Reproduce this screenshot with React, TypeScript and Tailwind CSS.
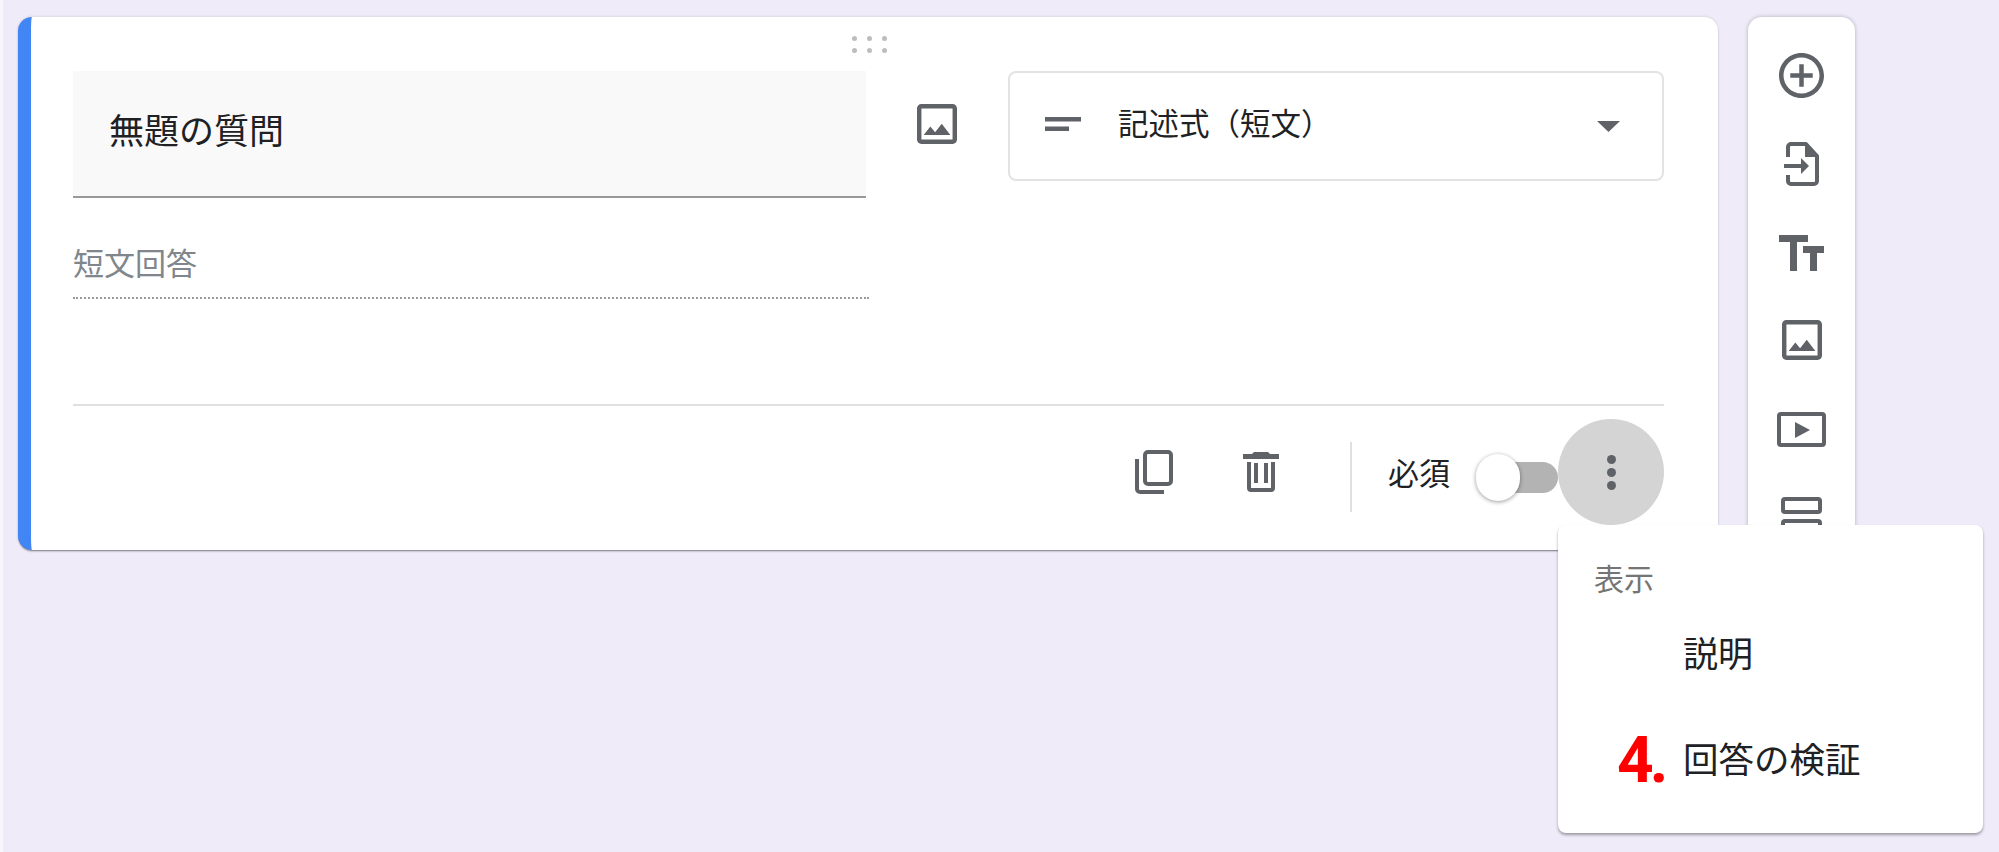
const IMAGE_PATH =
  'M19 5v14H5V5h14m0-2H5c-1.1 0-2 .9-2 2v14c0 1.1.9 2 2 2h14c1.1 0 2-.9 2-2V5c0-1.1-.9-2-2-2zm-4.86 8.86l-3 3.87L9 13.14 6 17h12l-3.86-5.14z';

function ImageIcon({ className }: { className?: string }) {
  return (
    <svg className={className} viewBox="3 3 18 18" fill="#5f6368">
      <path d={IMAGE_PATH} />
    </svg>
  );
}

function ImportIcon() {
  return (
    <svg className="h-[44px] w-[35px]" viewBox="0 0 35 44" fill="none" stroke="#5f6368" strokeWidth={4}>
      <path d="M4 15V5a3 3 0 0 1 3-3h15l11 12v25a3 3 0 0 1-3 3H7a3 3 0 0 1-3-3v-6" strokeLinejoin="round" />
      <path d="M21 1v14h14z" fill="#5f6368" stroke="none" />
      <path d="M0 24h18" />
      <path d="M17 16l8 8-8 8z" fill="#5f6368" stroke="none" />
    </svg>
  );
}

function TextIcon() {
  return (
    <svg className="h-[36px] w-[45px]" viewBox="0 0 45 36" fill="#5f6368">
      <path d="M0 0h29v7H18v29h-7V7H0z" />
      <path d="M24 11h21v7h-7v18h-7V18h-7z" />
    </svg>
  );
}

function VideoIcon() {
  return (
    <svg className="h-[35px] w-[49px]" viewBox="0 0 49 35" fill="none" stroke="#5f6368" strokeWidth={4}>
      <rect x="2" y="2" width="45" height="31" rx="2" />
      <path d="M18 10v16l15-8z" fill="#5f6368" stroke="none" />
    </svg>
  );
}

function SectionIcon() {
  return (
    <svg className="h-[40px] w-[41px]" viewBox="0 0 41 40" fill="none" stroke="#5f6368" strokeWidth={4}>
      <rect x="2" y="2" width="37" height="13" rx="2" />
      <rect x="2" y="24" width="37" height="13" rx="2" />
    </svg>
  );
}

function CopyIcon() {
  return (
    <svg className="h-[44px] w-[38px]" viewBox="0 0 38 44" fill="none" stroke="#5f6368" strokeWidth={4}>
      <rect x="10" y="2" width="26" height="32" rx="3" />
      <path d="M2 9v30a3 3 0 0 0 3 3h24" />
    </svg>
  );
}

function TrashIcon() {
  return (
    <svg className="h-[40px] w-[36px]" viewBox="0 0 36 40" fill="#5f6368">
      <path d="M11 0h14l2 2h9v5H0V2h9z" />
      <path d="M4 10h4v26h20V10h4v26a4 4 0 0 1-4 4H8a4 4 0 0 1-4-4z" />
      <path d="M11 11h4v20h-4zM21 11h4v20h-4z" />
    </svg>
  );
}

function DragHandle() {
  return (
    <div className="absolute left-[821px] top-[19px] grid grid-cols-3 gap-x-[10px] gap-y-[7px]">
      {[0, 1, 2, 3, 4, 5].map(i => (
        <div key={i} className="h-[5px] w-[5px] rounded-full bg-[#bdbdbd]" />
      ))}
    </div>
  );
}

export default function App() {
  return (
    <div className="relative flex h-[852px] w-[1999px] items-start gap-[30px] overflow-hidden border-l-[3px] border-[#f7f6fb] bg-[#efebf9] pl-[15px] pt-[17px] font-['Roboto','Noto_Sans_CJK_JP',sans-serif] text-[#202124]">
      {/* Question card */}
      <div className="relative flex h-[533px] w-[1700px] shrink-0 flex-col rounded-[14px] border-l-[13px] border-[#4285f4] bg-white pl-[42px] pr-[54px] pt-[54px] shadow-[0_2px_2px_-1px_rgba(0,0,0,0.45),0_0_3px_rgba(0,0,0,0.15)]">
        <DragHandle />

        <div className="flex items-start">
          <div className="flex h-[127px] w-[793px] items-start border-b-2 border-[#999999] bg-[#f9f9f9] pl-[36px] pt-[38px] text-[35px] leading-[48px]">
            無題の質問
          </div>
          <ImageIcon className="ml-[51px] mt-[33px] h-[40px] w-[40px]" />
          <div className="ml-[51px] flex h-[110px] w-[656px] items-start rounded-[8px] border-2 border-[#e3e3e3] pl-[35px] pt-[24px]">
            <svg className="mt-[20px] h-[14px] w-[36px]" viewBox="0 0 36 14" fill="#5f6368">
              <path d="M0 0h36v4.500H0zM0 9.500h24V14H0z" />
            </svg>
            <span className="ml-[37px] mt-[8px] text-[30.500px] leading-[40px]">記述式（短文）</span>
            <svg className="ml-auto mr-[42px] mt-[24px] h-[11px] w-[23px]" viewBox="0 0 23 11" fill="#5f6368">
              <path d="M0 0h23L11.500 11z" />
            </svg>
          </div>
        </div>

        <div className="flex h-[101px] w-[796px] items-end border-b-2 border-dotted border-[#9a9a9a] pb-[12px] text-[31px] leading-[40px] text-[#80868b]">
          短文回答
        </div>

        <div className="mt-[105px] flex h-[144px] items-start justify-end border-t-2 border-[#e0e0e0] pt-[13px]">
          <div className="flex items-center">
            <CopyIcon />
            <div className="ml-[70px]">
              <TrashIcon />
            </div>
            <div className="ml-[71px] mt-[10px] h-[70px] w-[2px] bg-[#e0e0e0]" />
            <span className="ml-[36px] mt-[6px] text-[31px] leading-[40px]">必須</span>
            <div className="relative ml-[26px] mt-[10px] flex h-[31px] w-[82px] justify-end">
              <div className="h-[31px] w-[60px] rounded-r-full bg-[#b3b3b3]" />
              <div className="absolute left-0 top-[-8px] h-[47px] w-[44px] rounded-full bg-white shadow-[0_1px_4px_rgba(0,0,0,0.4)]" />
            </div>
            <div className="flex h-[106px] w-[106px] flex-col items-center justify-center gap-[4px] rounded-full bg-[#d4d4d4]">
              <div className="h-[9px] w-[9px] rounded-full bg-[#5f6368]" />
              <div className="h-[9px] w-[9px] rounded-full bg-[#5f6368]" />
              <div className="h-[9px] w-[9px] rounded-full bg-[#5f6368]" />
            </div>
          </div>
        </div>
      </div>

      {/* Side toolbar, its lower end sits under the menu */}
      <div className="flex h-[533px] w-[107px] shrink-0 flex-col items-center rounded-[14px] bg-white pt-[36px] shadow-[0_0_4px_rgba(0,0,0,0.25)]">
        <svg className="h-[45px] w-[45px]" viewBox="2 2 20 20" fill="#5f6368">
          <path d="M13 7h-2v4H7v2h4v4h2v-4h4v-2h-4V7zm-1-5C6.480 2 2 6.480 2 12s4.480 10 10 10 10-4.480 10-10S17.520 2 12 2zm0 18c-4.410 0-8-3.590-8-8s3.590-8 8-8 8 3.590 8 8-3.590 8-8 8z" />
        </svg>
        <div className="mt-[44px]">
          <ImportIcon />
        </div>
        <div className="mt-[49px]">
          <TextIcon />
        </div>
        <ImageIcon className="mt-[49px] h-[40px] w-[40px]" />
        <div className="mt-[52px]">
          <VideoIcon />
        </div>
        <div className="mt-[50px]">
          <SectionIcon />
        </div>
      </div>

      {/* Overflow menu */}
      <div className="absolute left-[1555px] top-[525px] h-[308px] w-[425px] rounded-[8px] bg-white shadow-[0_2px_3px_rgba(0,0,0,0.35)]">
        <div className="pl-[36px] pt-[35px] text-[30px] leading-[40px] text-[#757575]">表示</div>
        <div className="mt-[36px] pl-[125px] text-[35px] leading-[40px]">説明</div>
        <div className="mt-[65px] flex items-center pl-[59px] text-[35.500px] leading-[40px]">
          <span className="w-[66px] text-[64px] font-bold tracking-[-4px] text-[#ff0000]">4.</span>
          <span>回答の検証</span>
        </div>
      </div>
    </div>
  );
}
